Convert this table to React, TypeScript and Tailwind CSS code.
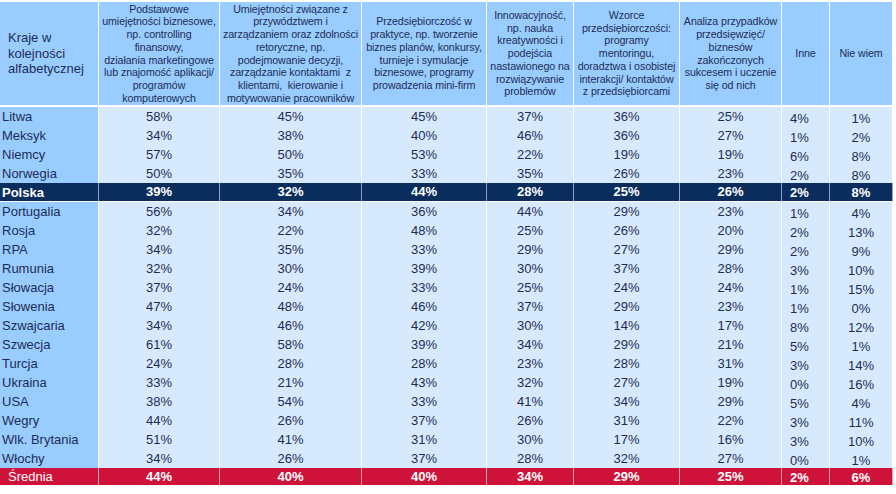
import React from 'react';

type Row = { name: string; v: number[]; kind?: 'pl' | 'avg' };

const rows: Row[] = [
	{ name: 'Litwa', v: [58, 45, 45, 37, 36, 25, 4, 1] },
	{ name: 'Meksyk', v: [34, 38, 40, 46, 36, 27, 1, 2] },
	{ name: 'Niemcy', v: [57, 50, 53, 22, 19, 19, 6, 8] },
	{ name: 'Norwegia', v: [50, 35, 33, 35, 26, 23, 2, 8] },
	{ name: 'Polska', v: [39, 32, 44, 28, 25, 26, 2, 8], kind: 'pl' },
	{ name: 'Portugalia', v: [56, 34, 36, 44, 29, 23, 1, 4] },
	{ name: 'Rosja', v: [32, 22, 48, 25, 26, 20, 2, 13] },
	{ name: 'RPA', v: [34, 35, 33, 29, 27, 29, 2, 9] },
	{ name: 'Rumunia', v: [32, 30, 39, 30, 37, 28, 3, 10] },
	{ name: 'Słowacja', v: [37, 24, 33, 25, 24, 24, 1, 15] },
	{ name: 'Słowenia', v: [47, 48, 46, 37, 29, 23, 1, 0] },
	{ name: 'Szwajcaria', v: [34, 46, 42, 30, 14, 17, 8, 12] },
	{ name: 'Szwecja', v: [61, 58, 39, 34, 29, 21, 5, 1] },
	{ name: 'Turcja', v: [24, 28, 28, 23, 28, 31, 3, 14] },
	{ name: 'Ukraina', v: [33, 21, 43, 32, 27, 19, 0, 16] },
	{ name: 'USA', v: [38, 54, 33, 41, 34, 29, 5, 4] },
	{ name: 'Wegry', v: [44, 26, 37, 26, 31, 22, 3, 11] },
	{ name: 'Wlk. Brytania', v: [51, 41, 31, 30, 17, 16, 3, 10] },
	{ name: 'Włochy', v: [34, 26, 37, 28, 32, 27, 0, 1] },
	{ name: 'Średnia', v: [44, 40, 40, 34, 29, 25, 2, 6], kind: 'avg' }
];

const headers: string[][] = [
	['Podstawowe', 'umiejętności biznesowe,', 'np. controlling', 'finansowy,', 'działania marketingowe', 'lub znajomość aplikacji/', 'programów', 'komputerowych'],
	['Umiejętności związane z', 'przywództwem i', 'zarządzaniem oraz zdolności', 'retoryczne, np.', 'podejmowanie decyzji,', 'zarządzanie kontaktami  z', 'klientami,  kierowanie i', 'motywowanie pracowników'],
	['Przedsiębiorczość w', 'praktyce, np. tworzenie', 'biznes planów, konkursy,', 'turnieje i symulacje', 'biznesowe, programy', 'prowadzenia mini-firm'],
	['Innowacyjność,', 'np. nauka', 'kreatywności i', 'podejścia', 'nastawionego na', 'rozwiązywanie', 'problemów'],
	['Wzorce', 'przedsiębiorczości:', 'programy', 'mentoringu,', 'doradztwa i osobistej', 'interakcji/ kontaktów', 'z przedsiębiorcami'],
	['Analiza przypadków', 'przedsięwzięć/', 'biznesów', 'zakończonych', 'sukcesem i uczenie', 'się od nich'],
	['Inne'],
	['Nie wiem']
];

const cols = 'grid grid-cols-[99px_121px_142px_125px_87px_106px_102px_48px_63px]';

const App = () => {
	return (
		<div className="h-[494px] w-[896px] bg-white pt-[2px] font-['Liberation_Sans',Arial,sans-serif] text-[#1d2c55]">
			<div className="w-[893px]">
				{/* header */}
				<div className={`${cols} h-[105px]`}>
					<div className="flex flex-col justify-center border-b-2 border-r border-white bg-[#99ccff] pl-[8px] text-[13px] leading-[15.5px]">
						<div>Kraje w</div>
						<div>kolejności</div>
						<div>alfabetycznej</div>
					</div>
					{headers.map((h, i) => (
						<div
							key={i}
							className="flex flex-col items-center justify-center whitespace-pre border-b-2 border-r border-white bg-[#99ccff] text-center text-[10.7px] leading-[12.7px] tracking-[-0.1px]"
						>
							{h.map((line, j) => (
								<div key={j}>{line}</div>
							))}
						</div>
					))}
				</div>

				{rows.map(r => {
					const pl = r.kind === 'pl';
					const avg = r.kind === 'avg';
					const bg = pl ? 'bg-[#0b2d5e]' : avg ? 'bg-[#cf1239]' : 'bg-[#d7eafd]';
					const line = pl
						? 'border-r-[#8fa6c4] border-b-white'
						: avg
							? 'border-r-[#f2a0b2] border-b-white'
							: 'border-white';
					const txt = pl ? 'text-white font-bold' : avg ? 'text-white' : '';
					return (
						<div key={r.name} className={`${cols} ${avg ? 'h-[18px]' : 'h-[19px]'}`}>
							<div
								className={`flex items-center whitespace-nowrap border-b border-r ${line} ${
									pl ? bg : avg ? `${bg} pl-[8px]` : 'bg-[#99ccff]'
								} ${pl || !avg ? 'pl-[2px]' : ''} ${txt} text-[13px] leading-[15px]`}
							>
								{r.name}
							</div>
							{r.v.map((n, i) => (
								<div
									key={i}
									className={`flex justify-center border-b border-r ${line} ${bg} ${txt} ${
										avg ? 'font-bold' : ''
									} text-[13px] leading-[15px] ${
										i >= 6
											? pl || avg
												? 'items-start pt-[2px]'
												: 'items-start pt-[4px]'
											: 'items-center pb-[1px]'
									} ${i === 6 ? 'pr-[12px]' : ''}`}
								>
									{n}%
								</div>
							))}
						</div>
					);
				})}
			</div>
		</div>
	);
};

export default App;
